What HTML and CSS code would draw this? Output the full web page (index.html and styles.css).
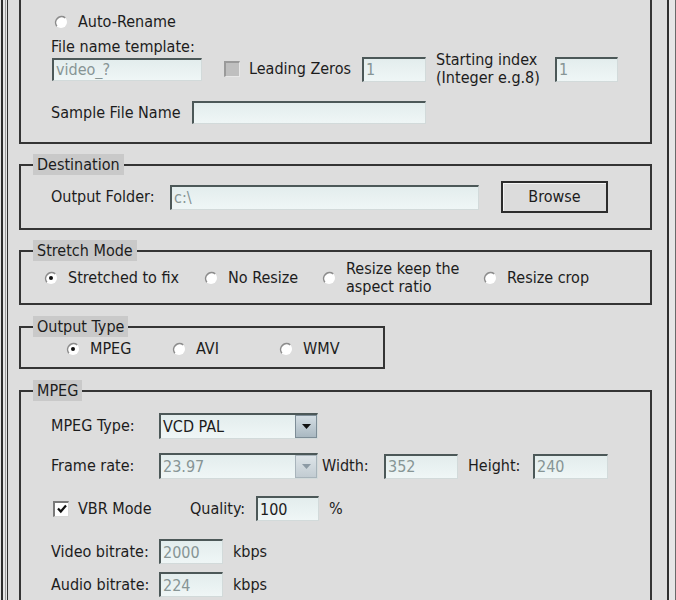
FILE: index.html
```
<!DOCTYPE html>
<html lang="en">
<head>
    <meta charset="UTF-8">
    <meta name="viewport" content="width=device-width, initial-scale=1.0">
    <title>Video Output Settings</title>
    <link rel="stylesheet" href="styles.css">
</head>
<body>
    <div class="frame">
        <div class="panel">
            <!-- Rename options (top of the group is scrolled away) -->
            <fieldset class="group group-top">
                <div class="row rename-row">
                    <label class="opt">
                        <svg class="radio" width="14" height="14" viewBox="0 0 14 14"><circle cx="7" cy="7" r="6" fill="#fff"/><path d="M11.2 2.8 A6 6 0 0 0 2.8 11.2" fill="none" stroke="#8c8c8c" stroke-width="1.6"/></svg>
                        Auto-Rename
                    </label>
                </div>
                <div class="caption">File name template:</div>
                <div class="row template-row">
                    <input class="field dim short w150" type="text" value="video_?">
                    <span class="check check-off"></span>
                    <span class="lbl lbl-zeros">Leading Zeros</span>
                    <input class="field dim w64" type="text" value="1">
                    <span class="lbl two-line lbl-index">Starting index<br>(Integer e.g.8)</span>
                    <input class="field dim w63" type="text" value="1">
                </div>
                <div class="row sample-row">
                    <span class="lbl lbl-sample">Sample File Name</span>
                    <input class="field short w234" type="text" value="">
                </div>
            </fieldset>

            <fieldset class="group group-dest">
                <legend>Destination</legend>
                <div class="row dest-row">
                    <span class="lbl lbl-folder">Output Folder:</span>
                    <input class="field dim w309" type="text" value="c:\">
                    <button class="btn" type="button">Browse</button>
                </div>
            </fieldset>

            <fieldset class="group group-stretch">
                <legend>Stretch Mode</legend>
                <div class="choices stretch-choices">
                    <label class="opt">
                        <svg class="radio" width="14" height="14" viewBox="0 0 14 14"><circle cx="7" cy="7" r="6" fill="#fff"/><path d="M11.2 2.8 A6 6 0 0 0 2.8 11.2" fill="none" stroke="#8c8c8c" stroke-width="1.6"/><circle cx="7" cy="7" r="2" fill="#111"/></svg>
                        Stretched to fix
                    </label>
                    <label class="opt">
                        <svg class="radio" width="14" height="14" viewBox="0 0 14 14"><circle cx="7" cy="7" r="6" fill="#fff"/><path d="M11.2 2.8 A6 6 0 0 0 2.8 11.2" fill="none" stroke="#8c8c8c" stroke-width="1.6"/></svg>
                        No Resize
                    </label>
                    <label class="opt">
                        <svg class="radio" width="14" height="14" viewBox="0 0 14 14"><circle cx="7" cy="7" r="6" fill="#fff"/><path d="M11.2 2.8 A6 6 0 0 0 2.8 11.2" fill="none" stroke="#8c8c8c" stroke-width="1.6"/></svg>
                        <span class="two-line">Resize keep the<br>aspect ratio</span>
                    </label>
                    <label class="opt">
                        <svg class="radio" width="14" height="14" viewBox="0 0 14 14"><circle cx="7" cy="7" r="6" fill="#fff"/><path d="M11.2 2.8 A6 6 0 0 0 2.8 11.2" fill="none" stroke="#8c8c8c" stroke-width="1.6"/></svg>
                        Resize crop
                    </label>
                </div>
            </fieldset>

            <fieldset class="group group-type">
                <legend>Output Type</legend>
                <div class="choices type-choices">
                    <label class="opt">
                        <svg class="radio" width="14" height="14" viewBox="0 0 14 14"><circle cx="7" cy="7" r="6" fill="#fff"/><path d="M11.2 2.8 A6 6 0 0 0 2.8 11.2" fill="none" stroke="#8c8c8c" stroke-width="1.6"/><circle cx="7" cy="7" r="2" fill="#111"/></svg>
                        MPEG
                    </label>
                    <label class="opt">
                        <svg class="radio" width="14" height="14" viewBox="0 0 14 14"><circle cx="7" cy="7" r="6" fill="#fff"/><path d="M11.2 2.8 A6 6 0 0 0 2.8 11.2" fill="none" stroke="#8c8c8c" stroke-width="1.6"/></svg>
                        AVI
                    </label>
                    <label class="opt">
                        <svg class="radio" width="14" height="14" viewBox="0 0 14 14"><circle cx="7" cy="7" r="6" fill="#fff"/><path d="M11.2 2.8 A6 6 0 0 0 2.8 11.2" fill="none" stroke="#8c8c8c" stroke-width="1.6"/></svg>
                        WMV
                    </label>
                </div>
            </fieldset>

            <fieldset class="group group-mpeg">
                <legend>MPEG</legend>
                <div class="row mpeg-row1">
                    <span class="lbl lbl-col">MPEG Type:</span>
                    <div class="combo">
                        <span class="combo-text">VCD PAL</span>
                        <span class="drop"><svg width="9" height="5" viewBox="0 0 9 5"><path d="M0 0 H9 L4.5 5 Z" fill="#111"/></svg></span>
                    </div>
                </div>
                <div class="row mpeg-row2">
                    <span class="lbl lbl-col">Frame rate:</span>
                    <div class="combo combo-off">
                        <span class="combo-text">23.97</span>
                        <span class="drop"><svg width="9" height="5" viewBox="0 0 9 5"><path d="M0 0 H9 L4.5 5 Z" fill="#8c9aa4"/></svg></span>
                    </div>
                    <span class="lbl lbl-width">Width:</span>
                    <input class="field dim w74" type="text" value="352">
                    <span class="lbl lbl-height">Height:</span>
                    <input class="field dim w75" type="text" value="240">
                </div>
                <div class="row mpeg-row3">
                    <span class="check check-on"><svg width="12" height="12" viewBox="0 0 12 12"><path d="M2 5.5 L4.8 8.5 L10 2.5" fill="none" stroke="#111" stroke-width="2.2"/></svg></span>
                    <span class="lbl lbl-vbr">VBR Mode</span>
                    <span class="lbl lbl-quality">Quality:</span>
                    <input class="field w63" type="text" value="100">
                    <span class="lbl lbl-unit">%</span>
                </div>
                <div class="row mpeg-row4">
                    <span class="lbl lbl-col">Video bitrate:</span>
                    <input class="field dim w64" type="text" value="2000">
                    <span class="lbl lbl-unit">kbps</span>
                </div>
                <div class="row mpeg-row5">
                    <span class="lbl lbl-col">Audio bitrate:</span>
                    <input class="field dim w64" type="text" value="224">
                    <span class="lbl lbl-unit">kbps</span>
                </div>
            </fieldset>
        </div>
    </div>
</body>
</html>
```

FILE: styles.css
```
body {
    margin: 0;
    background: #e4e4e4;
    font-family: "DejaVu Sans Condensed", "DejaVu Sans", sans-serif;
    font-stretch: condensed;
    font-size: 16px;
    line-height: 18px;
    color: #1c1c1c;
    overflow: hidden;
}

/* window edges */
.frame {
    margin-left: 1px;
    border-left: 2px solid #2e2e2e;
    border-right: 1px solid #6a6a6a;
    padding: 0 6px 0 4px;
    background: #e6e6e6;
    box-shadow: inset 2px 0 0 #e6e6e6, inset 3px 0 0 #a0a0a0;
    height: 600px;
}
.panel {
    border-left: 1px solid #2e2e2e;
    border-right: 2px solid #2e2e2e;
    background: #dddddd;
    height: 600px;
    overflow: hidden;
}

/* group boxes */
.group {
    box-sizing: border-box;
    margin: 0 15px 0 11px;
    padding: 0;
    min-width: 0;
    border: 2px solid #343434;
}
.group legend {
    margin-left: 12px;
    padding: 0 4px;
    line-height: 21px;
    background: #c9c9c9;
}
.group-top {
    border-top: 0;
    padding: 12px 0 18px;
}
.group-dest {
    margin-top: 10px;
    padding: 6px 0 15px;
}
.group-stretch {
    margin-top: 10px;
    padding-bottom: 7px;
}
.group-type {
    width: 366px;
    margin-top: 11px;
    padding-bottom: 8px;
}
.group-mpeg {
    margin-top: 11px;
    padding-bottom: 40px;
}

.row {
    display: flex;
    align-items: center;
}
.lbl {
    flex: none;
    white-space: nowrap;
}
.two-line {
    display: inline-block;
    white-space: nowrap;
}

/* radio options */
.opt {
    display: flex;
    align-items: center;
    white-space: nowrap;
}
.radio {
    flex: none;
    margin-right: 10px;
}

/* text boxes */
.field {
    box-sizing: border-box;
    height: 25px;
    padding: 0 2px;
    border-style: solid;
    border-width: 2px 1px 1px 2px;
    border-color: #4c5858 #d2dada #d2dada #4c5858;
    background: linear-gradient(#e3eded, #eff6f6);
    font: inherit;
    color: #1c1c1c;
    outline: none;
}
.field.dim {
    color: #879595;
}
.field.short {
    height: 23px;
}
.w63 { width: 63px; }
.w64 { width: 64px; }
.w74 { width: 74px; }
.w75 { width: 75px; }
.w150 { width: 150px; }
.w234 { width: 234px; }
.w309 { width: 309px; }

/* check boxes */
.check {
    box-sizing: border-box;
    flex: none;
    width: 16px;
    height: 16px;
    border-style: solid;
    border-width: 2px 1px 1px 2px;
    display: flex;
    align-items: center;
    justify-content: center;
}
.check-off {
    border-color: #9a9a9a #e8e8e8 #e8e8e8 #9a9a9a;
    background: #bfbfbf;
}
.check-on {
    border-color: #7a7a7a #d8d8d8 #d8d8d8 #7a7a7a;
    background: #fff;
}

/* drop-down lists */
.combo {
    box-sizing: border-box;
    width: 159px;
    height: 26px;
    display: flex;
    border-style: solid;
    border-width: 2px 1px 1px 2px;
    border-color: #4c5858 #d2dada #d2dada #4c5858;
    background: linear-gradient(#e3eded, #eff6f6);
}
.combo-text {
    flex: 1;
    padding-left: 2px;
    line-height: 23px;
}
.combo-off .combo-text {
    color: #879595;
}
.drop {
    width: 20px;
    display: flex;
    align-items: center;
    justify-content: center;
    border: 1px solid #7d8d97;
    background: linear-gradient(#d4dee4, #a9b8c1);
}
.combo-off .drop {
    border-color: #a8b4bb;
    background: linear-gradient(#dde4e8, #c2ccd2);
}

.btn {
    box-sizing: border-box;
    width: 107px;
    height: 32px;
    margin-left: 22px;
    border: 2px solid #2c2c2c;
    box-shadow: inset 1px 1px 0 #f4f4f4;
    background: #dcdcdc;
    font: inherit;
    color: #1c1c1c;
    padding: 0;
}

/* rename group */
.rename-row {
    height: 20px;
    padding-left: 33px;
}
.caption {
    margin-top: 6px;
    padding-left: 30px;
    line-height: 18px;
}
.template-row {
    height: 26px;
    padding-left: 31px;
}
.template-row .check {
    margin-left: 22px;
}
.lbl-zeros {
    width: 113px;
    margin-left: 9px;
}
.lbl-index {
    width: 119px;
    margin-left: 10px;
}
.sample-row {
    margin-top: 19px;
    padding-left: 30px;
}
.lbl-sample {
    width: 141px;
}

/* destination */
.dest-row {
    height: 32px;
    padding-left: 30px;
}
.lbl-folder {
    width: 119px;
}

/* radio rows */
.choices {
    display: grid;
    align-items: center;
}
.stretch-choices {
    height: 36px;
    margin-top: -1px;
    padding-left: 23px;
    grid-template-columns: 160px 118px 161px auto;
}
.type-choices {
    height: 20px;
    margin-top: 2px;
    padding-left: 45px;
    grid-template-columns: 106px 107px auto;
}

/* mpeg settings */
.lbl-col {
    width: 108px;
}
.group-mpeg .row {
    padding-left: 30px;
}
.mpeg-row1 {
    margin-top: 12px;
}
.mpeg-row2 {
    margin-top: 14px;
}
.lbl-width {
    width: 62px;
    margin-left: 4px;
}
.lbl-height {
    width: 65px;
    margin-left: 10px;
}
.group-mpeg .mpeg-row3 {
    margin-top: 17px;
    padding-left: 32px;
}
.lbl-vbr {
    width: 112px;
    margin-left: 9px;
}
.lbl-quality {
    width: 66px;
}
.lbl-unit {
    margin-left: 10px;
}
.mpeg-row4 {
    margin-top: 18px;
}
.mpeg-row5 {
    margin-top: 8px;
}
```
